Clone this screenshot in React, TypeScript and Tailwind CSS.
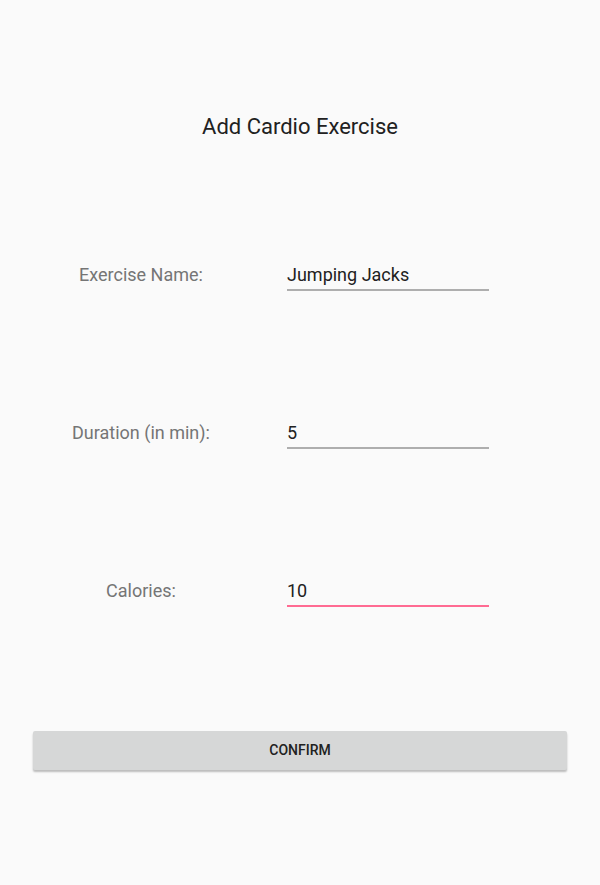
export default function App() {
  const rows = [
    { label: "Exercise Name:", value: "Jumping Jacks", focused: false },
    { label: "Duration (in min):", value: "5", focused: false },
    { label: "Calories:", value: "10", focused: true },
  ];
  return (
    <div
      className="w-[600px] h-[885px] bg-[#fafafa] flex flex-col"
      style={{ fontFamily: "Roboto, 'Liberation Sans', sans-serif" }}
    >
      <div className="h-[112px]" />
      <div className="h-[28px] flex items-center justify-center text-[22px] text-[#212121]">
        Add Cardio Exercise
      </div>
      <div className="h-[120px]" />
      <div className="flex flex-col gap-[130px]">
        {rows.map((r) => (
          <div key={r.label} className="flex h-[28px] items-center">
            <div className="w-[282px] text-center text-[18px] text-[#757575]">{r.label}</div>
            <div className="ml-[5px] w-[202px] h-[28px] relative flex items-center">
              <span className="text-[18px] text-[#212121]">{r.value}</span>
              <div
                className={
                  r.focused
                    ? "absolute left-0 right-0 top-[29px] h-[2px] bg-[#ff6b92]"
                    : "absolute left-0 right-0 top-[29px] h-[2px] bg-[#aeaeae]"
                }
              />
            </div>
          </div>
        ))}
      </div>
      <div className="h-[127px]" />
      <div className="px-[33px]">
        <div className="h-[39px] bg-[#d6d7d7] rounded-[2px] shadow-[0_2px_2px_rgba(0,0,0,0.25)] flex items-center justify-center text-[14px] font-medium text-[#212121]">
          CONFIRM
        </div>
      </div>
    </div>
  );
}
